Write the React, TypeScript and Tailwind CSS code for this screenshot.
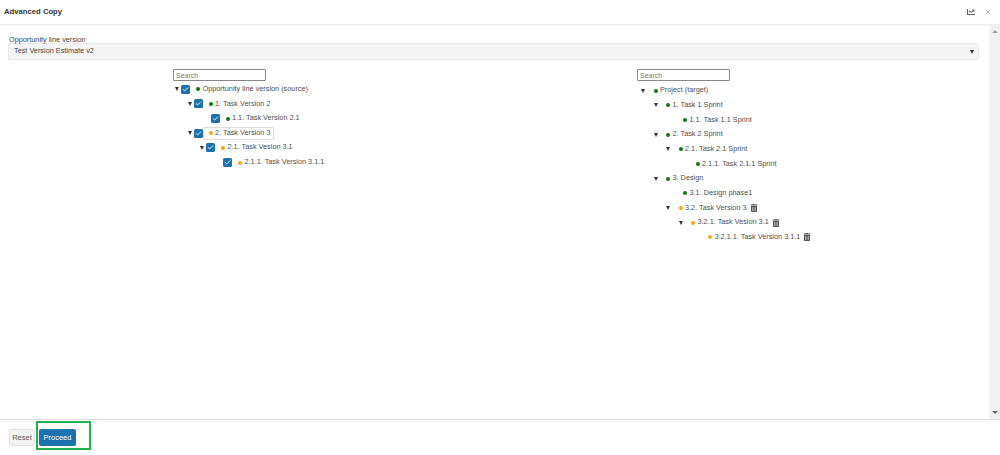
import { FaChartLine, FaTrashAlt } from "react-icons/fa";
import { Check, X } from "lucide-react";

type TreeNode = {
  label: string;
  dot: "green" | "orange";
  trash?: boolean;
  selected?: boolean;
  children?: TreeNode[];
};

const sourceTree: TreeNode = {
  label: "Opportunity line version (source)",
  dot: "green",
  children: [
    {
      label: "1. Task Version 2",
      dot: "green",
      children: [{ label: "1.1. Task Version 2.1", dot: "green" }],
    },
    {
      label: "2. Task Version 3",
      dot: "orange",
      selected: true,
      children: [
        {
          label: "2.1. Task Vesion 3.1",
          dot: "orange",
          children: [{ label: "2.1.1. Task Version 3.1.1", dot: "orange" }],
        },
      ],
    },
  ],
};

const targetTree: TreeNode = {
  label: "Project (target)",
  dot: "green",
  children: [
    {
      label: "1. Task 1 Sprint",
      dot: "green",
      children: [{ label: "1.1. Task 1.1 Sprint", dot: "green" }],
    },
    {
      label: "2. Task 2 Sprint",
      dot: "green",
      children: [
        {
          label: "2.1. Task 2.1 Sprint",
          dot: "green",
          children: [{ label: "2.1.1. Task 2.1.1 Sprint", dot: "green" }],
        },
      ],
    },
    {
      label: "3. Design",
      dot: "green",
      children: [
        { label: "3.1. Design phase1", dot: "green" },
        {
          label: "3.2. Task Version 3",
          dot: "orange",
          trash: true,
          children: [
            {
              label: "3.2.1. Task Vesion 3.1",
              dot: "orange",
              trash: true,
              children: [{ label: "3.2.1.1. Task Version 3.1.1", dot: "orange", trash: true }],
            },
          ],
        },
      ],
    },
  ],
};

function TreeRow({ node, checkable }: { node: TreeNode; checkable: boolean }) {
  const hasChildren = !!node.children?.length;

  return (
    <li>
      <div className="flex h-[14.67px] items-center">
        {hasChildren ? (
          <span className="flex w-[8px] shrink-0 justify-center">
            <span className="h-0 w-0 border-x-[2.5px] border-t-[4px] border-x-transparent border-t-[#333]" />
          </span>
        ) : (
          <span className="w-[12.5px] shrink-0" />
        )}

        {checkable && (
          <span className="mr-[4px] flex h-[9px] w-[9px] shrink-0 items-center justify-center rounded-[1.5px] bg-[#1b72ad]">
            <Check size={7} strokeWidth={3} className="text-white" />
          </span>
        )}

        {!checkable && <span className="w-[4.5px] shrink-0" />}

        <span
          className={[
            "flex h-[13px] items-center whitespace-nowrap rounded-[1px] border",
            node.selected
              ? "ml-[-4px] border-[#dddddd] bg-white pl-[5px] pr-[3px]"
              : "border-transparent px-[1px]",
          ].join(" ")}
        >
          <span
            className={[
              "mr-[2.5px] h-[4px] w-[4px] rounded-full",
              node.dot === "green" ? "bg-[#0a7a0a]" : "bg-[#f9a61a]",
            ].join(" ")}
          />
          {node.label}
          {node.trash && <FaTrashAlt className="ml-[3px] text-[#555]" size={8} />}
        </span>
      </div>

      {hasChildren && (
        <ul className="pl-[12.5px]">
          {node.children!.map((child) => (
            <TreeRow key={child.label} node={child} checkable={checkable} />
          ))}
        </ul>
      )}
    </li>
  );
}

function Tree({ root, checkable }: { root: TreeNode; checkable: boolean }) {
  return (
    <div>
      <input
        placeholder="Search"
        className="block h-[12px] w-[93px] rounded-[1px] border border-[#888] bg-white px-[2px] text-[7px] outline-none placeholder:text-[#777]"
      />
      <ul className={checkable ? "mt-[1px]" : "mt-[2.5px] pl-[2px]"}>
        <TreeRow node={root} checkable={checkable} />
      </ul>
    </div>
  );
}

export default function App() {
  return (
    <div className="flex h-screen flex-col overflow-hidden bg-white text-[7.3px] text-[#4f4f4f] [font-family:'Liberation_Sans',Arial,sans-serif]">
      <header className="flex h-[25px] shrink-0 items-center justify-between border-b border-[#eeeeee] pl-[4px] pr-[8px]">
        <h1 className="text-[7.7px] font-bold text-[#333]">Advanced Copy</h1>
        <div className="flex items-center gap-[9px] text-[#666]">
          <FaChartLine size={8} />
          <X size={8} strokeWidth={1.5} />
        </div>
      </header>

      <div className="flex min-h-0 flex-1">
        <main className="min-w-0 flex-1 pl-[8px] pr-[10px] pt-[10px]">
          <label className="block pl-[1px] text-[7.3px] leading-[9px] text-[#444]">Opportunity line version</label>
          <div className="mt-[-1px] flex h-[17px] items-center justify-between rounded-[2px] border border-[#e8e8e8] bg-[#f5f5f5] pl-[5px] pr-[4px] text-[#444]">
            <span>Test Version Estimate v2</span>
            <span className="h-0 w-0 border-x-[2.5px] border-t-[4px] border-x-transparent border-t-[#333]" />
          </div>

          <div className="mt-[9px] flex pl-[165px]">
            <div className="w-[464px]">
              <Tree root={sourceTree} checkable />
            </div>
            <Tree root={targetTree} checkable={false} />
          </div>
        </main>

        <aside className="flex w-[11px] shrink-0 flex-col items-center justify-between bg-[#f1f1f1] py-[5px]">
          <span className="h-0 w-0 border-x-[3px] border-b-[3px] border-x-transparent border-b-[#a3a3a3]" />
          <span className="h-0 w-0 border-x-[3px] border-t-[3px] border-x-transparent border-t-[#6b6b6b]" />
        </aside>
      </div>

      <footer className="relative flex h-[36px] shrink-0 items-start gap-[4px] border-t border-[#dddddd] pl-[9px] pt-[9px]">
        <button className="h-[17px] w-[26px] rounded-[2px] border border-[#e3e3e3] bg-[#f3f3f3] text-[7.5px] text-[#555]">
          Reset
        </button>
        <button className="h-[17px] w-[37px] rounded-[2px] bg-[#1b72ad] text-[7.5px] text-white">Proceed</button>
        <span className="absolute left-[36px] top-[1px] h-[29px] w-[55px] border-[2.5px] border-[#22b14c]" />
      </footer>
    </div>
  );
}
